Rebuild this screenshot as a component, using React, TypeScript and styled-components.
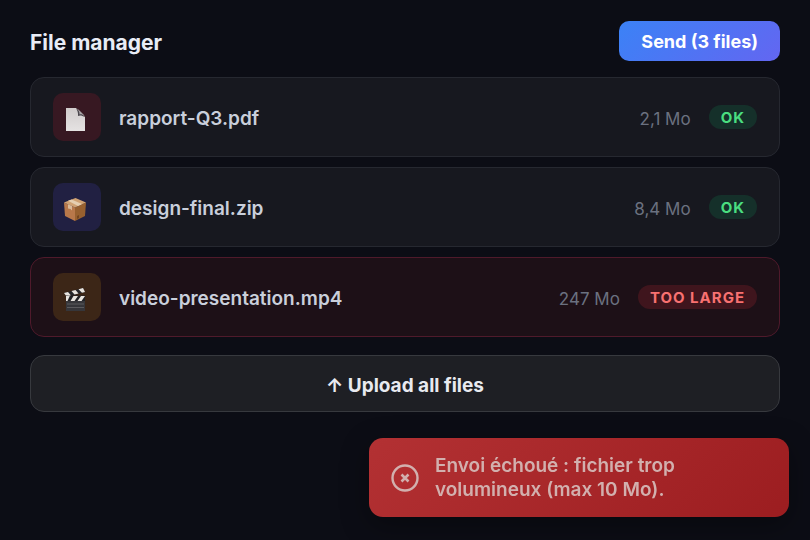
import React from "react";
import styled, { createGlobalStyle } from "styled-components";

type Tone = "red" | "indigo" | "amber";

const GlobalStyle = createGlobalStyle`
  * { box-sizing: border-box; }
  body {
    margin: 0;
    background: #0c0d15;
    color: #e2e8f0;
    font-family: Inter, "Liberation Sans", sans-serif;
  }
  button { font-family: inherit; cursor: pointer; }
`;

const Page = styled.main`
  display: flex;
  flex-direction: column;
  min-height: 100vh;
  padding: 21px 30px;
`;

const Header = styled.header`
  display: flex;
  align-items: center;
  justify-content: space-between;
  margin-bottom: 16px;
`;

const Title = styled.h1`
  margin: 0;
  padding-top: 3px;
  font-size: 21px;
  line-height: 28px;
  font-weight: 700;
  color: #e8ecf6;
`;

const SendButton = styled.button`
  height: 40px;
  padding: 0 22px;
  border: 0;
  border-radius: 10px;
  background: linear-gradient(135deg, #3b82f6, #6366f1);
  color: #fff;
  font-size: 18px;
  font-weight: 700;
`;

const FileList = styled.ul`
  display: flex;
  flex-direction: column;
  gap: 10px;
  margin: 0 0 18px;
  padding: 0;
  list-style: none;
`;

const FileRow = styled.li<{ $error?: boolean }>`
  display: flex;
  align-items: center;
  gap: 18px;
  height: 80px;
  padding: 0 22px;
  border: 1px solid ${(p) => (p.$error ? "#4f1a2b" : "#262830")};
  border-radius: 14px;
  background: ${(p) => (p.$error ? "#1d1017" : "#17181f")};
`;

const tileColors: Record<Tone, string> = {
  red: "#371822",
  indigo: "#212042",
  amber: "#3c2617",
};

const FileTile = styled.span<{ $tone: Tone }>`
  display: flex;
  flex: none;
  align-items: center;
  justify-content: center;
  width: 48px;
  height: 48px;
  padding: 4px 4px 0 0;
  border-radius: 10px;
  background: ${(p) => tileColors[p.$tone]};
`;

const FileName = styled.span`
  flex: 1;
  padding-top: 3px;
  font-size: 19px;
  line-height: 24px;
  font-weight: 600;
  color: #c9cfdb;
`;

const FileSize = styled.span`
  padding-top: 3px;
  font-size: 17px;
  line-height: 24px;
  color: #6b7180;
`;

const Badge = styled.span<{ $error?: boolean }>`
  padding: 1px 12px 0;
  border-radius: 12px;
  background: ${(p) => (p.$error ? "#3f151d" : "#15302a")};
  color: ${(p) => (p.$error ? "#f87171" : "#4ade80")};
  font-size: 15px;
  line-height: 23px;
  font-weight: 700;
  letter-spacing: 1px;
`;

const UploadButton = styled.button`
  height: 57px;
  padding: 3px 16px 0;
  border: 1px solid #37393e;
  border-radius: 14px;
  background: #1e1f24;
  color: #e8eaf0;
  font-size: 19px;
  font-weight: 700;
`;

const Toast = styled.div`
  position: fixed;
  right: 21px;
  bottom: 23px;
  display: flex;
  align-items: center;
  gap: 16px;
  width: 420px;
  padding: 16px 22px 15px;
  border-radius: 14px;
  background: linear-gradient(135deg, #b33133, #9c1d20);
  box-shadow: 0 8px 28px rgba(0, 0, 0, 0.35);
  color: #d2b0ae;
  font-size: 19px;
  line-height: 24px;
  font-weight: 600;
`;

const ToastText = styled.span`
  max-width: 280px;
`;

const ToastIcon = styled.svg`
  flex: none;
`;

function DocumentIcon() {
  return (
    <svg width="24" height="26" viewBox="0 0 24 26" aria-hidden="true">
      <defs>
        <linearGradient id="sheet" x1="0" y1="0" x2="0" y2="1">
          <stop offset="0" stopColor="#d0cccc" />
          <stop offset="1" stopColor="#e5e2e2" />
        </linearGradient>
      </defs>
      <path d="M3 2h10l9 9v14H3z" fill="url(#sheet)" />
      <path d="M13 2l9 9c-3-1.500-5-2-7-1 .3-3-.5-5.500-2-8z" fill="#4c484e" />
      <path d="M14.500 2.500l7.500 7.500c-2-1.500-4-2-5.500-1.500 0-2.500-.8-4-2-6z" fill="#a9a5a8" />
    </svg>
  );
}

function PackageIcon() {
  return (
    <svg width="24" height="26" viewBox="0 0 24 26" aria-hidden="true">
      <path d="M1 6.500l11 5v13.500L2 20z" fill="#b8784a" />
      <path d="M12 11.500l11-5L22 20l-10 5z" fill="#97602f" />
      <path d="M1 6.500L12.500 2 23 6.500l-11 5z" fill="#d0a273" />
      <path d="M5 4.800l3.500-1.400L19 8l-4 2z" fill="#e6cfb0" />
      <path d="M5 8.300l4 1.800v4.500L7.500 13 5 12.500z" fill="#d9b999" />
      <path d="M14 20l2-1v3l-2 1z" fill="#74451f" />
    </svg>
  );
}

function ClapperIcon() {
  return (
    <svg width="24" height="26" viewBox="0 0 24 26" aria-hidden="true">
      <path d="M1 7L20 2l2 4L4 11z" fill="#25262a" />
      <path d="M1 7l4-1 3 3.500-4 1.500zM8.500 5l4-1 3 3.500-4 1zM15.500 3.200L20 2l2 4-3 .8z" fill="#e8e4df" />
      <path d="M3 10h19v15H3z" fill="#36363a" />
      <path d="M3 9.500h19V15H3z" fill="#202125" />
      <path d="M3 10l4-.5L4.500 15H3zM10.500 10h4.500l-3.500 5H7.500zM18 10h4l-3.500 5h-4z" fill="#e8e4df" />
      <path d="M4 18h17M4 21.500h17" stroke="#5b5a5d" strokeWidth="1" />
    </svg>
  );
}

interface FileEntry {
  name: string;
  size: string;
  status: string;
  tone: Tone;
  error?: boolean;
  icon: React.ReactNode;
}

const files: FileEntry[] = [
  { name: "rapport-Q3.pdf", size: "2,1 Mo", status: "OK", tone: "red", icon: <DocumentIcon /> },
  { name: "design-final.zip", size: "8,4 Mo", status: "OK", tone: "indigo", icon: <PackageIcon /> },
  {
    name: "video-presentation.mp4",
    size: "247 Mo",
    status: "TOO LARGE",
    tone: "amber",
    error: true,
    icon: <ClapperIcon />,
  },
];

export default function App() {
  return (
    <>
      <GlobalStyle />
      <Page>
        <Header>
          <Title>File manager</Title>
          <SendButton type="button">Send (3 files)</SendButton>
        </Header>
        <FileList>
          {files.map((file) => (
            <FileRow key={file.name} $error={file.error}>
              <FileTile $tone={file.tone}>{file.icon}</FileTile>
              <FileName>{file.name}</FileName>
              <FileSize>{file.size}</FileSize>
              <Badge $error={file.error}>{file.status}</Badge>
            </FileRow>
          ))}
        </FileList>
        <UploadButton type="button">↑ Upload all files</UploadButton>
      </Page>
      <Toast role="alert">
        <ToastIcon width="28" height="28" viewBox="0 0 28 28" fill="none" stroke="currentColor" aria-hidden="true">
          <circle cx="14" cy="14" r="12.5" strokeWidth="2.4" />
          <path d="M10.500 10.500l7 7m0-7l-7 7" strokeWidth="2.6" />
        </ToastIcon>
        <ToastText>Envoi échoué : fichier trop volumineux (max 10 Mo).</ToastText>
      </Toast>
    </>
  );
}
